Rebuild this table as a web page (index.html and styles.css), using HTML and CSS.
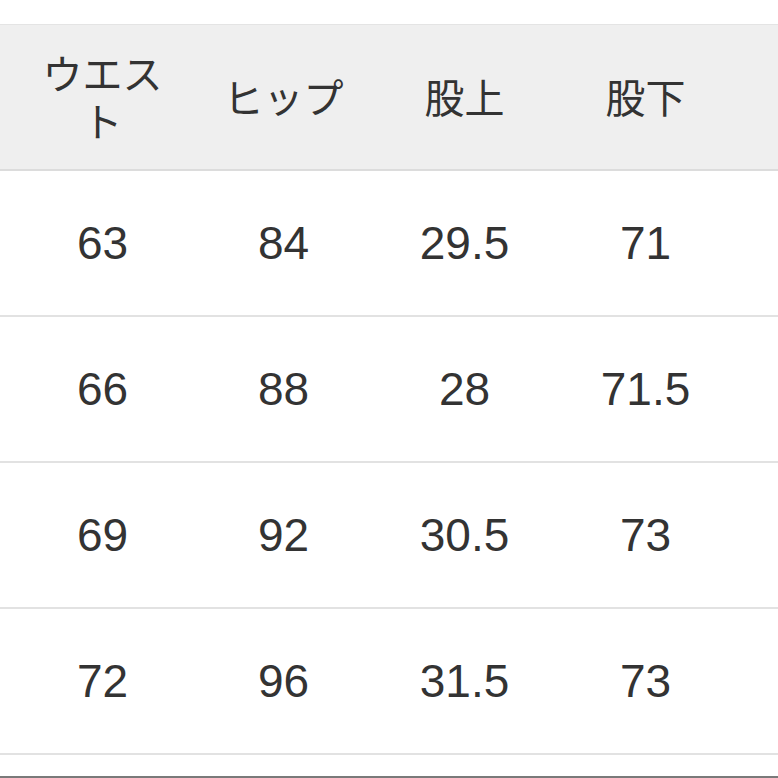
FILE: index.html
```html
<!DOCTYPE html>
<html lang="ja">
<head>
<meta charset="utf-8">
<title>サイズ表</title>
<link rel="stylesheet" href="styles.css">
</head>
<body>
<div class="page">
  <div class="table">
    <div class="row head">
      <div class="cell">ウエス<br>ト</div>
      <div class="cell">ヒップ</div>
      <div class="cell">股上</div>
      <div class="cell">股下</div>
      <div class="cell"></div>
    </div>
    <div class="row">
      <div class="cell">63</div>
      <div class="cell">84</div>
      <div class="cell">29.5</div>
      <div class="cell">71</div>
      <div class="cell"></div>
    </div>
    <div class="row">
      <div class="cell">66</div>
      <div class="cell">88</div>
      <div class="cell">28</div>
      <div class="cell">71.5</div>
      <div class="cell"></div>
    </div>
    <div class="row">
      <div class="cell">69</div>
      <div class="cell">92</div>
      <div class="cell">30.5</div>
      <div class="cell">73</div>
      <div class="cell"></div>
    </div>
    <div class="row">
      <div class="cell">72</div>
      <div class="cell">96</div>
      <div class="cell">31.5</div>
      <div class="cell">73</div>
      <div class="cell"></div>
    </div>
  </div>
  <div class="bottom-bar"></div>
</div>
</body>
</html>
```
FILE: styles.css
```css
html, body {
  margin: 0;
  padding: 0;
  background: #ffffff;
}
.page {
  width: 778px;
  height: 778px;
  overflow: hidden;
  padding-top: 24px;
  box-sizing: border-box;
  display: flex;
  flex-direction: column;
}
.table {
  display: flex;
  flex-direction: column;
  flex: none;
}
.row {
  display: grid;
  grid-template-columns: repeat(4, 181px) 1fr;
  padding-left: 12px;
  height: 144px;
  flex: none;
  border-bottom: 2px solid #e2e2e2;
  color: #333333;
  font-family: "Liberation Sans", Arial, sans-serif;
  font-size: 46px;
}
.row.head {
  height: 144px;
  background: #efefef;
  border-top: 1px solid #e4e4e4;
  border-bottom: 2px solid #dcdcdc;
  font-family: "Noto Sans CJK JP", "Noto Sans", sans-serif;
  font-size: 40px;
  line-height: 48px;
}
.cell {
  display: flex;
  align-items: center;
  justify-content: center;
  text-align: center;
}
.head .cell {
  padding-bottom: 2px;
}
.bottom-bar {
  flex: none;
  margin-top: 21px;
  height: 2px;
  background: #7a7a7a;
}
```
